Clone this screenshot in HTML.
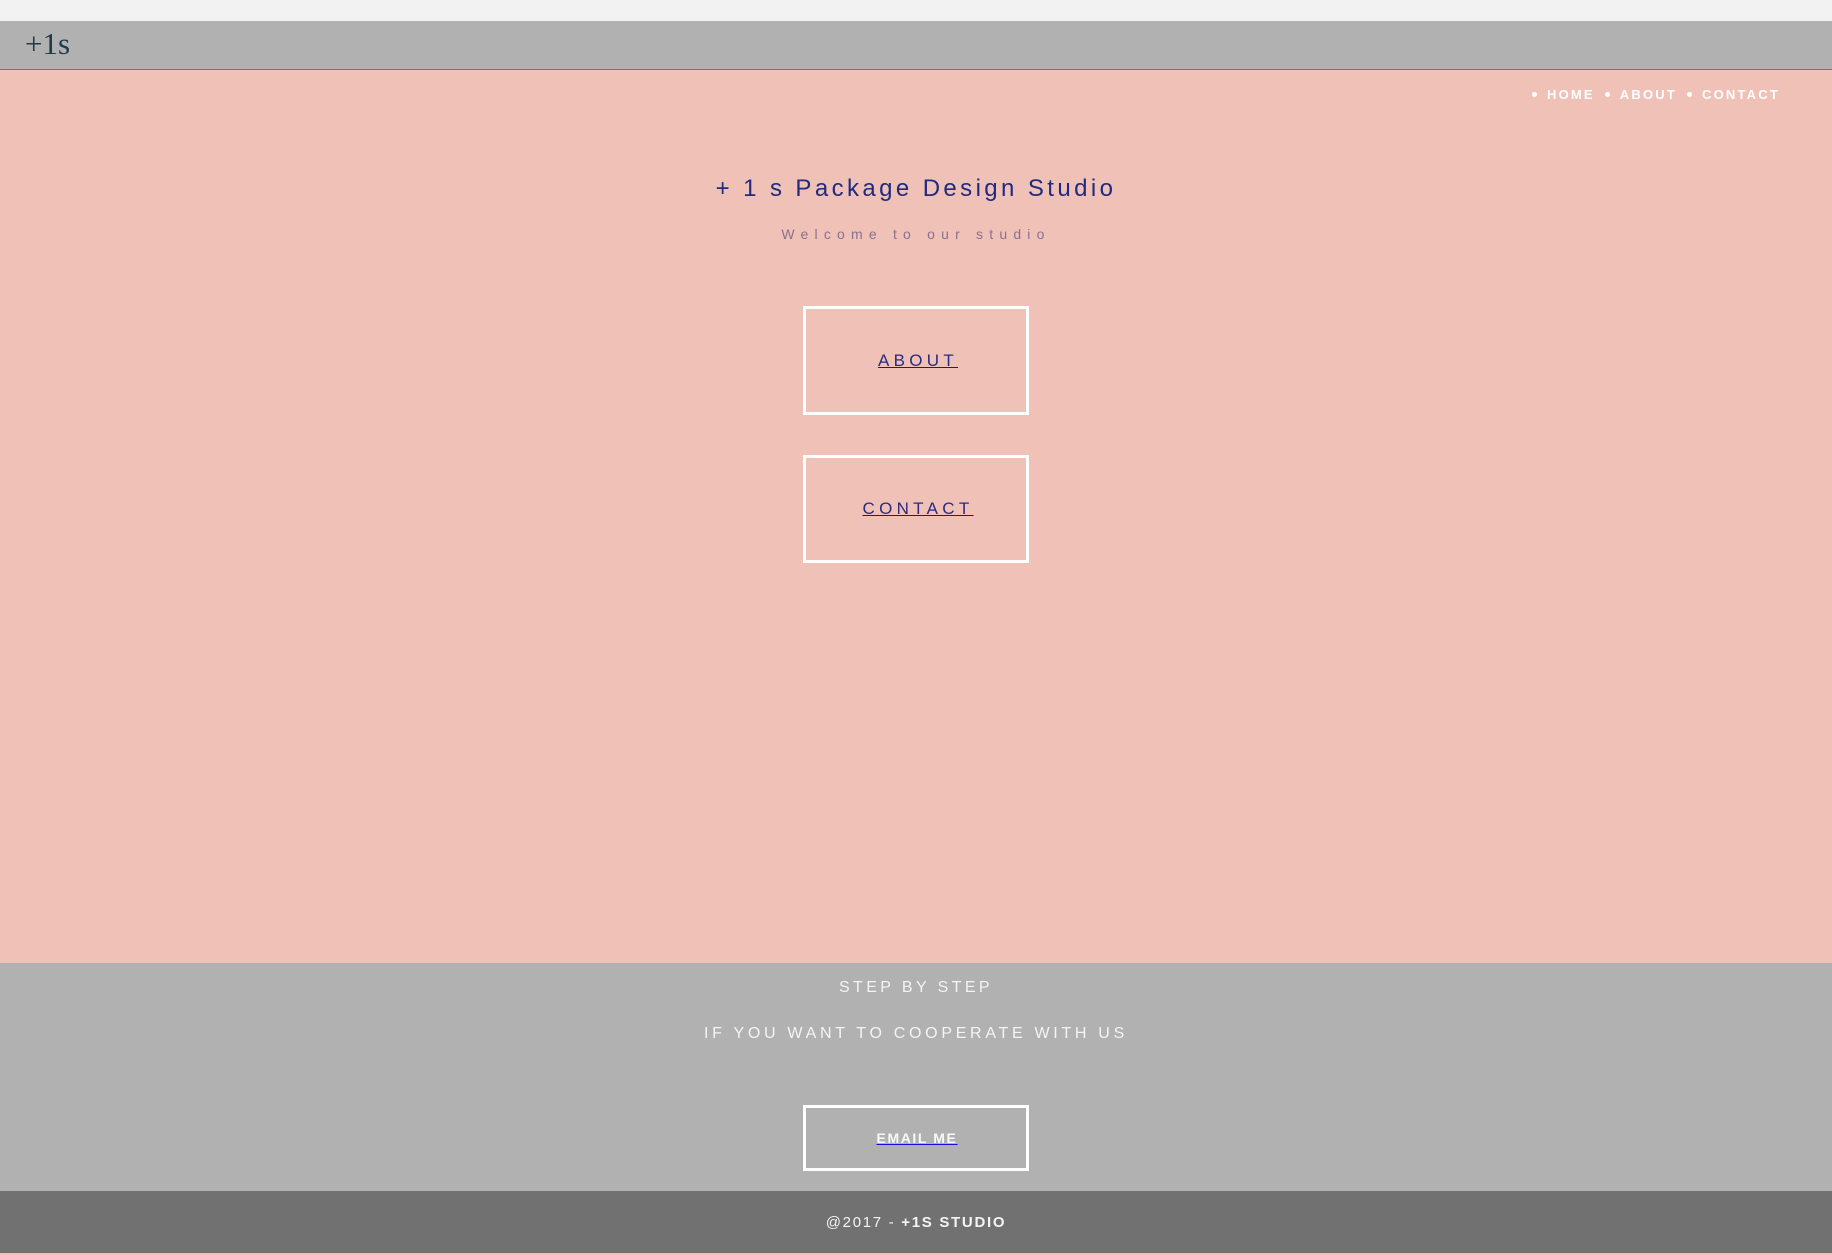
<!DOCTYPE html>
<html><head><meta charset="utf-8"><style>
*{margin:0;padding:0;box-sizing:border-box}
body{width:1832px;height:1253px;overflow:hidden;font-family:"Liberation Sans",sans-serif;background:#f0c2b7;position:relative}
.top{position:absolute;left:0;top:0;width:1832px;height:21px;background:#f2f2f2}
.hdr{position:absolute;left:0;top:21px;width:1832px;height:49px;background:#b1b1b1;border-bottom:1px solid #3f8a9a}
.logo{position:absolute;left:25px;top:5px;font-family:"Liberation Serif",serif;font-size:31px;color:#1d3b4a}
.nav{position:absolute;right:52px;top:87px;font-size:13px;font-weight:bold;color:#fff;letter-spacing:2.2px}
.nav b{display:inline-block;width:5px;height:5px;border-radius:50%;background:#fff;vertical-align:middle;margin:0 10px 3px 10px}
.title{position:absolute;left:0;width:1832px;top:175px;text-align:center;font-size:24px;letter-spacing:3.4px;color:#1f2a80}
.sub{position:absolute;left:0;width:1832px;top:226px;text-align:center;font-size:14px;letter-spacing:6.2px;color:#8a7090}
.box{position:absolute;left:803px;width:226px;border:3px solid #fff;display:flex;align-items:center;justify-content:center}
.box a{color:#2a2a80;text-decoration:underline;text-decoration-color:#1010e0;font-size:17px;letter-spacing:4.3px;margin-right:-4px}
.gray{position:absolute;left:0;top:963px;width:1832px;height:228px;background:#b1b1b1}
.l1{position:absolute;left:0;width:1832px;top:979px;text-align:center;font-size:16px;letter-spacing:3.4px;color:#f4f4f4}
.l2{position:absolute;left:0;width:1832px;top:1025px;text-align:center;font-size:16px;letter-spacing:3.7px;color:#f4f4f4}
.email a{color:#f8f8f8;font-size:14px;letter-spacing:1.6px;font-weight:bold;text-decoration-color:#1010e0;margin-right:-2px}
.foot{position:absolute;left:0;top:1191px;width:1832px;height:62px;background:#717171;text-align:center;color:#f4f4f4;font-size:15px;letter-spacing:1.7px;line-height:64px}
.foot b{font-weight:bold}
</style></head><body>
<div class="top"></div>
<div class="hdr"><div class="logo">+1s</div></div>
<div class="nav"><b></b>HOME<b></b>ABOUT<b></b>CONTACT</div>
<div class="title">+ 1 s Package Design Studio</div>
<div class="sub">Welcome to our studio</div>
<div class="box" style="top:306px;height:109px"><a>ABOUT</a></div>
<div class="box" style="top:455px;height:108px"><a>CONTACT</a></div>
<div class="gray"></div>
<div class="l1">STEP BY STEP</div>
<div class="l2">IF YOU WANT TO COOPERATE WITH US</div>
<div class="box email" style="top:1105px;height:66px"><a>EMAIL ME</a></div>
<div class="foot">@2017 - <b>+1S STUDIO</b></div>
</body></html>
